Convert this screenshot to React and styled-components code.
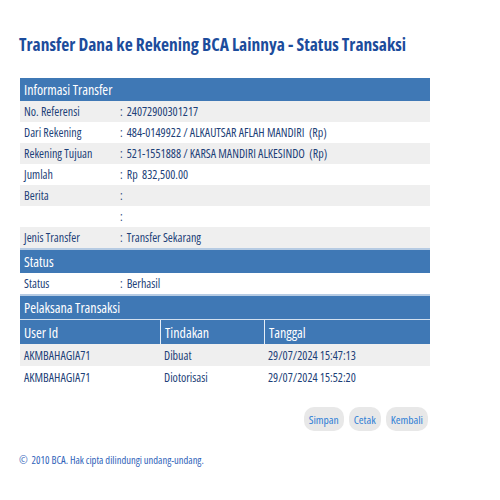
import React from "react";
import styled, { createGlobalStyle } from "styled-components";

const Global = createGlobalStyle`
  html, body { margin: 0; padding: 0; background: #fff; }
  body {
    font-family: "Open Sans", "Liberation Sans", Arial, sans-serif;
    font-stretch: 75%;
  }
`;

const Page = styled.div`
  padding: 31px 70px 0 20px;
  width: 410px;
`;

const Title = styled.h1`
  margin: 0 0 21px -1px;
  font-size: 17.5px;
  font-weight: bold;
  font-stretch: 75%;
  color: #1c4c9c;
  line-height: 26px;
  white-space: nowrap;
`;

const Table = styled.div`
  display: flex;
  flex-direction: column;
`;

const SectionHead = styled.div`
  background: #3f78b5;
  color: #fff;
  font-size: 14px;
  font-weight: 500;
  height: 23px;
  line-height: 23px;
  padding-left: 4px;
  border-top: ${(p) => (p.$gap ? "2px solid #b6cbe3" : "0")};
`;

const Row = styled.div`
  display: grid;
  grid-template-columns: 100px 1fr;
  height: 21px;
  align-items: center;
  background: ${(p) => (p.$alt ? "#efefef" : "#fff")};
  font-size: 12px;
  color: #1d3f78;
`;

const Label = styled.div`
  padding-left: 4px;
`;

const Value = styled.div`
  white-space: pre;
  &::before { content: ":"; margin-right: 4px; }
`;

const Grid = styled.div`
  display: grid;
  grid-template-columns: 140px 104px 1fr;
  height: ${(p) => (p.$head ? "24px" : "22px")};
  align-items: center;
  background: ${(p) => (p.$head ? "#3f78b5" : p.$alt ? "#efefef" : "#fff")};
  color: ${(p) => (p.$head ? "#fff" : "#1d3f78")};
  font-size: ${(p) => (p.$head ? "14px" : "12px")};
  font-weight: ${(p) => (p.$head ? 500 : 400)};
  border-top: ${(p) => (p.$head ? "1px solid #d3e0ef" : "0")};
`;

const Cell = styled.div`
  padding-left: 4px;
  height: 100%;
  display: flex;
  align-items: center;
  border-left: ${(p) => (p.$sep ? "1px solid #e6eef7" : "0")};
  white-space: nowrap;
`;

const Actions = styled.div`
  display: flex;
  justify-content: flex-end;
  gap: 5px;
  margin-top: 19px;
  padding-right: 2px;
`;

const Button = styled.button`
  font-family: inherit;
  font-stretch: 75%;
  font-size: 11.5px;
  color: #2f7fd6;
  background: #e8e8e8;
  border: none;
  border-radius: 10px;
  height: 24px;
  padding: 0 5px;
`;

const Footer = styled.div`
  margin-top: 22px;
  margin-left: -1px;
  font-size: 10.5px;
  color: #2f63b9;
  white-space: pre;
`;

const info = [
  ["No. Referensi", "24072900301217"],
  ["Dari Rekening", "484-0149922 / ALKAUTSAR AFLAH MANDIRI  (Rp)"],
  ["Rekening Tujuan", "521-1551888 / KARSA MANDIRI ALKESINDO  (Rp)"],
  ["Jumlah", "Rp  832,500.00"],
  ["Berita", ""],
  ["", ""],
  ["Jenis Transfer", "Transfer Sekarang"],
];

const people = [
  ["AKMBAHAGIA71", "Dibuat", "29/07/2024 15:47:13"],
  ["AKMBAHAGIA71", "Diotorisasi", "29/07/2024 15:52:20"],
];

export default function App() {
  return (
    <Page>
      <Global />
      <Title>Transfer Dana ke Rekening BCA Lainnya - Status Transaksi</Title>
      <Table>
        <SectionHead>Informasi Transfer</SectionHead>
        {info.map(([l, v], i) => (
          <Row key={i} $alt={i % 2 === 0}>
            <Label>{l}</Label>
            <Value>{v}</Value>
          </Row>
        ))}
        <SectionHead $gap>Status</SectionHead>
        <Row>
          <Label>Status</Label>
          <Value>Berhasil</Value>
        </Row>
        <SectionHead $gap>Pelaksana Transaksi</SectionHead>
        <Grid $head>
          <Cell>User Id</Cell>
          <Cell $sep>Tindakan</Cell>
          <Cell $sep>Tanggal</Cell>
        </Grid>
        {people.map((r, i) => (
          <Grid key={i} $alt={i % 2 === 0}>
            <Cell>{r[0]}</Cell>
            <Cell>{r[1]}</Cell>
            <Cell>{r[2]}</Cell>
          </Grid>
        ))}
      </Table>
      <Actions>
        <Button>Simpan</Button>
        <Button>Cetak</Button>
        <Button>Kembali</Button>
      </Actions>
      <Footer>©  2010 BCA. Hak cipta dilindungi undang-undang.</Footer>
    </Page>
  );
}
